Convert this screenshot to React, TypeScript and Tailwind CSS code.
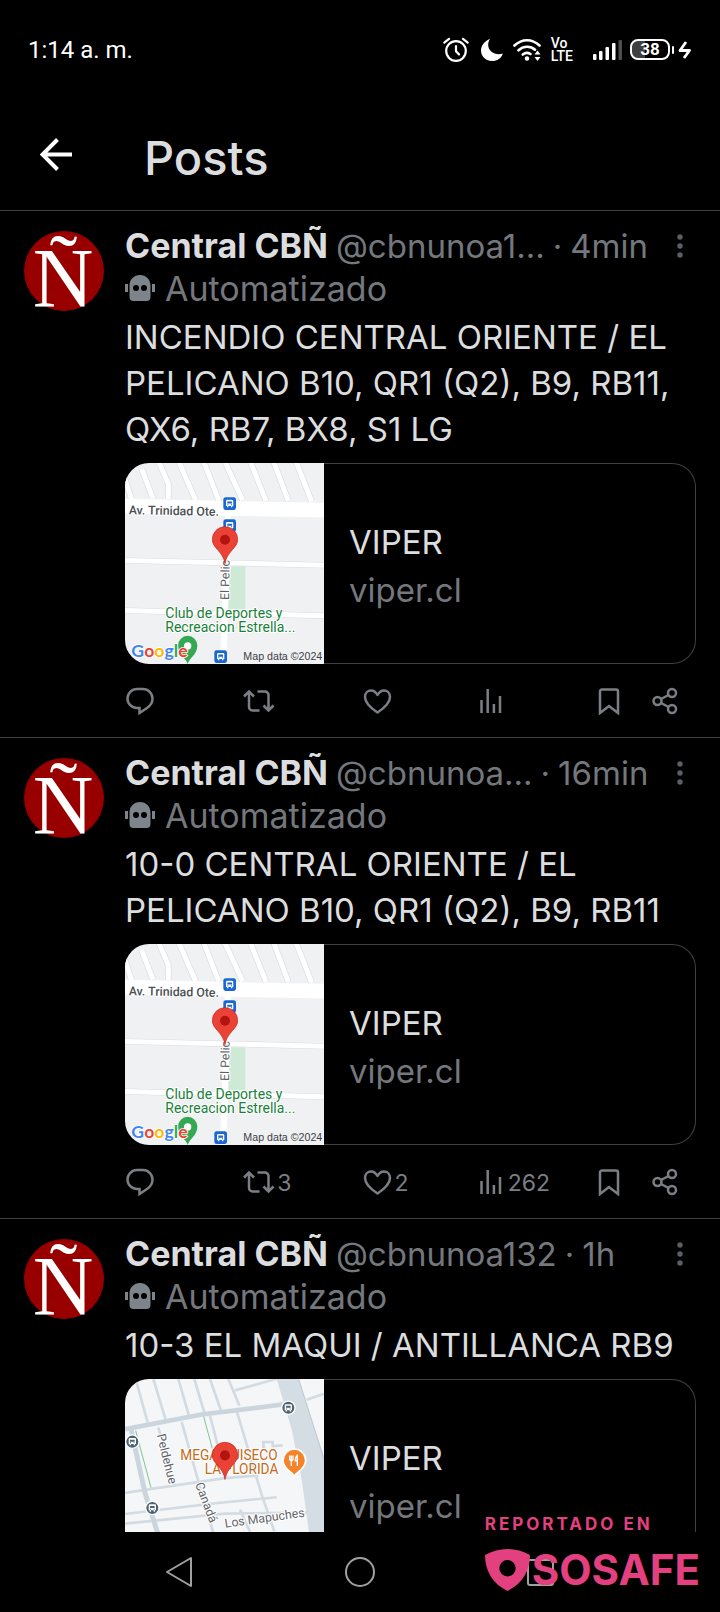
import type { ReactNode } from "react";

type MapKind = "pelicano" | "maqui";

interface Post {
  id: number;
  handle: string;
  time: string;
  text: string;
  map: MapKind;
  reposts?: number;
  likes?: number;
  views?: number;
}

const posts: Post[] = [
  {
    id: 1,
    handle: "@cbnunoa1...",
    time: "4min",
    text: "INCENDIO CENTRAL ORIENTE / EL PELICANO B10, QR1 (Q2), B9, RB11, QX6, RB7, BX8, S1 LG",
    map: "pelicano",
  },
  {
    id: 2,
    handle: "@cbnunoa...",
    time: "16min",
    text: "10-0 CENTRAL ORIENTE / EL PELICANO B10, QR1 (Q2), B9, RB11",
    map: "pelicano",
    reposts: 3,
    likes: 2,
    views: 262,
  },
  {
    id: 3,
    handle: "@cbnunoa132",
    time: "1h",
    text: "10-3 EL MAQUI / ANTILLANCA RB9",
    map: "maqui",
  },
];

function StatusBar() {
  return (
    <div className="flex h-[99px] shrink-0 items-center justify-between px-7 font-['Roboto',sans-serif] text-white">
      <span className="text-2xl">1:14 a. m.</span>
      <div className="flex items-center">
        {/* alarm */}
        <svg className="mr-3" width="26" height="26" viewBox="0 0 26 26" fill="none" stroke="currentColor" strokeWidth="2.2" strokeLinecap="round">
          <circle cx="13" cy="14" r="9.8" />
          <path d="M13 9v5.4l3 3M1.3 5.6 6 1.8M24.7 5.6 20 1.8" />
        </svg>
        {/* do not disturb moon */}
        <svg className="mr-2.5" width="22" height="24" viewBox="0 0 22 24" fill="currentColor">
          <path d="M9 1C3.500 3 0 7.500 0 12.500 0 18.500 5 23 11 23c5 0 9.500-3 10.800-7.600C15.500 18 7.500 14 7.200 7.500 7.100 5 7.700 2.800 9 1Z" />
        </svg>
        {/* wifi */}
        <svg className="mr-2.5" width="28" height="24" viewBox="0 0 28 24" fill="none" stroke="currentColor" strokeWidth="2.6" strokeLinecap="round">
          <path d="M1.500 7.500C9 .5 19 .5 26.500 7.500M5.500 12.300c5-4.600 12-4.600 16.500-.6M9.800 16.500c2.500-2 5-2.200 7.600-.5" />
          <circle cx="14" cy="20.500" r="2.200" fill="currentColor" stroke="none" />
          <path d="m24.500 12.500 3 4h-6zM24.500 23l3-4h-6z" fill="currentColor" stroke="none" />
        </svg>
        <div className="mr-5 text-[14px] leading-[13px] font-medium">
          Vo
          <br />
          LTE
        </div>
        {/* signal */}
        <svg className="mr-2" width="29" height="20" viewBox="0 0 29 20" fill="currentColor">
          <rect x="0" y="14" width="3.500" height="6" rx="1" />
          <rect x="6" y="11" width="3.500" height="9" rx="1" />
          <rect x="12.500" y="7" width="3.500" height="13" rx="1" />
          <rect x="19" y="3" width="3.500" height="17" rx="1" />
          <rect x="25.500" y="0" width="3.500" height="20" rx="1" opacity=".3" />
        </svg>
        {/* battery */}
        <div className="flex h-[21px] w-10 items-center justify-center rounded-lg border-2 border-white bg-linear-to-r from-neutral-700 from-35% to-black to-35% text-[17px] leading-none font-bold">
          38
        </div>
        <div className="mr-1 ml-0.5 h-2 w-0.5 rounded bg-white" />
        <svg width="14" height="20" viewBox="0 0 14 20" fill="none" stroke="currentColor" strokeWidth="2.800" strokeLinejoin="round">
          <path d="M8 2 2 10.500h9.500L6 18" />
        </svg>
      </div>
    </div>
  );
}

function Header() {
  return (
    <header className="flex h-28 shrink-0 items-center border-b border-neutral-700 pl-10">
      <button type="button" aria-label="Back" className="mr-[71px] text-white">
        <svg width="33" height="33" viewBox="0 0 33 33" fill="none" stroke="currentColor" strokeWidth="4">
          <path d="M32 16.500H3M17.500 1.500l-15 15 15 15" />
        </svg>
      </button>
      <h1 className="pt-1.5 text-[47px] leading-none font-medium">Posts</h1>
    </header>
  );
}

function Avatar() {
  return (
    <svg className="mt-1.5 h-20 w-20 shrink-0 overflow-visible" viewBox="0 0 80 80" role="img" aria-label="Central CBÑ">
      <circle cx="40" cy="40" r="40" fill="#980000" />
      <text x="39" y="76" textAnchor="middle" fontSize="84" fill="#fff" className="font-['Liberation_Serif',serif]">
        Ñ
      </text>
    </svg>
  );
}

function Robot() {
  return (
    <svg width="30" height="28" viewBox="0 0 30 28" fill="#7d848b">
      <path d="M0 10h3v8H0zM27 10h3v8h-3z" />
      <path
        fillRule="evenodd"
        d="M4.500 12C4.500 5 9 1 15 1s10.500 4 10.500 11v11a4 4 0 0 1-4 4h-13a4 4 0 0 1-4-4ZM11 11a3 3 0 1 0 0 6 3 3 0 0 0 0-6Zm8 0a3 3 0 1 0 0 6 3 3 0 0 0 0-6Z"
      />
    </svg>
  );
}

function Pin({ x, y }: { x: number; y: number }) {
  return (
    <g transform={`translate(${x} ${y})`}>
      <path
        d="M0 0C-3-18-10-28-22-42c-9-10-16-18-16-31a38 38 0 0 1 76 0c0 13-7 21-16 31C10-28 3-18 0 0Z"
        fill="#ea4335"
        stroke="#c5221f"
        strokeWidth="2"
      />
      <circle cy="-72" r="15" fill="#b31412" />
    </g>
  );
}

function BusStop({ x, y, round }: { x: number; y: number; round?: boolean }) {
  return (
    <g transform={`translate(${x} ${y})`}>
      {round ? (
        <circle r="20" fill="#4b6174" stroke="#fff" strokeWidth="4" />
      ) : (
        <rect x="-19" y="-19" width="38" height="38" rx="7" fill="#1967d2" />
      )}
      <path
        fillRule="evenodd"
        fill="#fff"
        d="M-7-11H7q4 0 4 4V7H8v4H4V7h-8v4h-4V7h-3V-7q0-4 4-4ZM-7-6v6H7v-6ZM-7 2v3h3V2Zm11 0v3h3V2Z"
      />
    </g>
  );
}

function PelicanoMap() {
  return (
    <svg viewBox="30 27 597 600" preserveAspectRatio="none" className="h-full w-full font-['Roboto',sans-serif]">
      <rect x="30" y="27" width="597" height="600" fill="#f0f1f3" />
      <g fill="none" stroke="#dadce0" strokeWidth="19">
        <path d="m28 70 22 66M80 45l34 88M132 25l28 65v45M190 20l52 118M265 20l46 118M328 20l55 118M405 20l48 120M475 20l45 120M542 20l48 122" />
      </g>
      <g fill="none" stroke="#fff" strokeWidth="15">
        <path d="m28 70 22 66M80 45l34 88M132 25l28 65v45M190 20l52 118M265 20l46 118M328 20l55 118M405 20l48 120M475 20l45 120M542 20l48 122" />
      </g>
      <path d="M30 134 627 146V190L30 178Z" fill="#fff" />
      <path d="M348 335h43v128h-55Z" fill="#ceead6" />
      <g fill="none" stroke="#dadce0">
        <path d="M30 318 627 332M30 467l597 16" strokeWidth="18" />
      </g>
      <g fill="none" stroke="#fff">
        <path d="M340 140 325 627" strokeWidth="19" />
        <path d="M30 318 627 332M30 467l597 16" strokeWidth="15" />
      </g>
      <BusStop x={344} y={148} />
      <BusStop x={344} y={214} />
      <BusStop x={317} y={605} />
      <g stroke="#fff" strokeWidth="6" strokeLinejoin="round" paintOrder="stroke">
        <text x="41" y="180" fontSize="37" fontWeight="500" fill="#4a4f55" transform="rotate(1 41 180)">
          Av. Trinidad Ote.
        </text>
        <text x="0" y="0" fontSize="37" fill="#5f6368" transform="translate(342 436) rotate(-89)">
          El Pelic
        </text>
        <text x="151" y="489" fontSize="42" fill="#188038">
          Club de Deportes y
        </text>
        <text x="151" y="532" fontSize="42" fill="#188038">
          Recreacion Estrella...
        </text>
      </g>
      <Pin x={330} y={328} />
      <path d="M218 627c-4-16-29-28-29-55a29 29 0 0 1 58 0c0 27-25 39-29 55Z" fill="#34a853" />
      <circle cx="218" cy="573" r="11" fill="#fff" />
      <text x="49" y="606" fontSize="53" fontWeight="700" stroke="#fff" strokeWidth="5" paintOrder="stroke" className="font-['Lato',sans-serif]">
        <tspan fill="#4285f4">G</tspan>
        <tspan fill="#ea4335">o</tspan>
        <tspan fill="#fbbc04">o</tspan>
        <tspan fill="#4285f4">g</tspan>
        <tspan fill="#34a853">l</tspan>
        <tspan fill="#ea4335">e</tspan>
      </text>
      <text x="385" y="614" fontSize="32" fill="#3c4043" className="font-['Liberation_Sans',sans-serif]">
        Map data ©2024
      </text>
    </svg>
  );
}

function MaquiMap() {
  return (
    <svg viewBox="30 30 597 600" preserveAspectRatio="none" className="h-full w-full font-['Roboto',sans-serif]">
      <rect x="30" y="30" width="597" height="600" fill="#f5f6f7" />
      <g fill="none" stroke="#d3dbe2" strokeWidth="8">
        <path d="m62 30 36 130M115 30l38 125M190 30l32 110M238 30l30 100M285 30l32 92M340 30l25 60 8 20M360 64l130-36M130 175l22 75M200 158l45 160 58 200M285 140l50 190M365 125l75 250 38 110M30 370l80-12 220-32 100-8M30 433l270-32 185-18M30 462l300-30 297-4M375 420l30 66M445 225l3 14M445 238v-20h28v12l30-2M575 92l52-18M605 272l22-4" />
      </g>
      <path d="M485 30h66l35 110 41 120v370h-25L560 330 530 180Z" fill="#d4dce4" />
      <path d="m551 30 35 110 41 130" fill="none" stroke="#bfc9d2" strokeWidth="3" />
      <path d="M30 180 260 136 520 104 530 130" fill="none" stroke="#cbd5dd" strokeWidth="14" />
      <path d="m48 180 42 190 38 120 30 100" fill="none" stroke="#cbd5dd" strokeWidth="15" />
      <path d="m62 184 46 170M266 142l26 96" fill="none" stroke="#7bc796" strokeWidth="3" />
      <BusStop x={520} y={116} round />
      <BusStop x={52} y={217} round />
      <BusStop x={112} y={415} round />
      <g stroke="#fff" strokeWidth="6" strokeLinejoin="round" paintOrder="stroke" fontSize="37" fill="#5f6368">
        <text transform="translate(125 197) rotate(76)">Peldehue</text>
        <text transform="translate(240 344) rotate(69)">Canadá</text>
        <text transform="translate(331 474) rotate(-8)">Los Mapuches</text>
        <g fill="#c26a1c" fontSize="41" textAnchor="end">
          <text x="488" y="272">MEGA QUISECO</text>
          <text x="490" y="314">LA FLORIDA</text>
        </g>
      </g>
      <path d="M538 320c-6-12-34-22-34-47a34 34 0 0 1 68 0c0 25-28 35-34 47Z" fill="#f5832b" stroke="#fff" strokeWidth="5" />
      <path d="M524 258v10q0 6 5 6t5-6v-10M529 258v32M547 290v-32q-6 4-6 16h6" fill="none" stroke="#fff" strokeWidth="4" />
      <Pin x={330} y={330} />
    </svg>
  );
}

function LinkCard({ map }: { map: MapKind }) {
  return (
    <a href="#viper" className="mt-[11px] flex h-[201px]">
      <div className="w-[199px] shrink-0 overflow-hidden rounded-l-[24px]">
        {map === "pelicano" ? <PelicanoMap /> : <MaquiMap />}
      </div>
      <div className="flex flex-1 flex-col justify-center rounded-r-[24px] border border-l-0 border-neutral-700 pt-1 pl-[25px] leading-12">
        <span>VIPER</span>
        <span className="text-[#74787d]">viper.cl</span>
      </div>
    </a>
  );
}

function Action({ label, count, className, children }: { label: string; count?: number; className: string; children: ReactNode }) {
  return (
    <button type="button" aria-label={label} className={`flex items-center gap-0.5 ${className}`}>
      {children}
      {count !== undefined && <span className="pt-1 text-[23px] leading-none">{count}</span>}
    </button>
  );
}

function Actions({ post }: { post: Post }) {
  return (
    <div className="flex h-[73px] items-center text-[#7b7f84]">
      <Action label="Reply" className="flex-1">
        <svg width="30" height="28" viewBox="0 0 30 28" fill="none" stroke="currentColor" strokeWidth="2.500">
          <path d="M12 2h6a9.500 9.500 0 0 1 9.500 9.500c0 4.500-2.500 7.500-5.500 9.500L14.500 26v-5H12A9.500 9.500 0 0 1 12 2Z" />
        </svg>
      </Action>
      <Action label="Repost" count={post.reposts} className="flex-1">
        <svg width="32" height="28" viewBox="0 0 32 28" fill="none" stroke="currentColor" strokeWidth="2.500">
          <path d="m1 9.500 5-5 5 5M6 5v15a3.500 3.500 0 0 0 3.500 3.500h7M14.500 4.500h7.500A3.500 3.500 0 0 1 25.500 8v15M20.500 18.500l5 5 5-5" />
        </svg>
      </Action>
      <Action label="Like" count={post.likes} className="flex-1">
        <svg width="31" height="28" viewBox="0 0 31 28" fill="none" stroke="currentColor" strokeWidth="2.500" strokeLinejoin="round">
          <path d="M15.500 25.500C9.500 21.500 3 16 3 10c0-4 2.700-6.500 6-6.500 3 0 5 1.800 6.500 4.500 1.500-2.700 3.500-4.500 6.500-4.500 3.300 0 6 2.500 6 6.500 0 6-6.500 11.500-12.500 15.500Z" />
        </svg>
      </Action>
      <Action label="Views" count={post.views} className="flex-1">
        <svg width="26" height="28" viewBox="0 0 26 28" fill="none" stroke="currentColor" strokeWidth="2.500">
          <path d="M1.500 26V13M7.700 26V2M13.900 26v-9M20 26V9" />
        </svg>
      </Action>
      <Action label="Bookmark" className="w-[54px]">
        <svg width="24" height="28" viewBox="0 0 24 28" fill="none" stroke="currentColor" strokeWidth="2.500">
          <path d="M4 2.500h14a2 2 0 0 1 2 2V26l-9-7-9 7V4.500a2 2 0 0 1 2-2Z" />
        </svg>
      </Action>
      <Action label="Share" className="w-11">
        <svg width="28" height="28" viewBox="0 0 28 28" fill="none" stroke="currentColor" strokeWidth="2.500">
          <circle cx="20" cy="6" r="4" />
          <circle cx="5.500" cy="14" r="4" />
          <circle cx="20" cy="22" r="4" />
          <path d="m9 12 7.500-4M9 16l7.500 4" />
        </svg>
      </Action>
    </div>
  );
}

function PostItem({ post }: { post: Post }) {
  return (
    <article className="flex gap-[21px] border-b border-neutral-700 pt-3.5 pr-6 pl-6">
      <Avatar />
      <div className="min-w-0 flex-1">
        <div className="flex h-[42px] items-center">
          <div className="flex min-w-0 flex-1 items-baseline gap-2 whitespace-nowrap text-[#74787d]">
            <span className="text-[34px] font-bold text-[#dcdddf]">Central CBÑ</span>
            <span>{post.handle}</span>
            <span>·</span>
            <span>{post.time}</span>
          </div>
          <button type="button" aria-label="More options" className="mr-3 text-[#5b5f63]">
            <svg width="8" height="28" viewBox="0 0 8 28" fill="currentColor">
              <circle cx="4" cy="5" r="2.700" />
              <circle cx="4" cy="14" r="2.700" />
              <circle cx="4" cy="23" r="2.700" />
            </svg>
          </button>
        </div>
        <div className="flex h-[42px] items-center gap-2.5 text-[34px] text-[#74787d]">
          <Robot />
          <span>Automatizado</span>
        </div>
        <p className="mt-[5px] leading-[46px]">{post.text}</p>
        <LinkCard map={post.map} />
        <Actions post={post} />
      </div>
    </article>
  );
}

function NavBar() {
  return (
    <nav className="flex h-20 shrink-0 items-center justify-center gap-[148px] text-neutral-400">
      <button type="button" aria-label="Back">
        <svg width="32" height="32" viewBox="0 0 32 32" fill="none" stroke="currentColor" strokeWidth="2" strokeLinejoin="round">
          <path d="M27 2v28L3 16Z" />
        </svg>
      </button>
      <button type="button" aria-label="Home">
        <svg width="32" height="32" viewBox="0 0 32 32" fill="none" stroke="currentColor" strokeWidth="2">
          <circle cx="16" cy="16" r="14" />
        </svg>
      </button>
      <button type="button" aria-label="Recent apps">
        <svg width="32" height="32" viewBox="0 0 32 32" fill="none" stroke="currentColor" strokeWidth="2">
          <rect x="4" y="4" width="25" height="25" rx="2" />
        </svg>
      </button>
    </nav>
  );
}

function Watermark() {
  return (
    <div className="absolute right-5 bottom-5 text-[#e2407f]">
      <div className="text-[17px] leading-6 font-bold tracking-[3px]">REPORTADO EN</div>
      <div className="mt-3 flex items-center gap-0.5">
        <svg width="45" height="44" viewBox="0 0 45 44" fill="currentColor">
          <path fillRule="evenodd" d="M0 7C14-1 31-1 45 7c0 16-8 29-22.500 36C8 36 0 23 0 7Zm22.500 5a8.200 8.200 0 1 0 0 16.400 8.200 8.200 0 0 0 0-16.400Z" />
        </svg>
        <span className="text-[42px] leading-[44px] font-bold">SOSAFE</span>
      </div>
    </div>
  );
}

export default function App() {
  return (
    <div className="relative flex h-screen flex-col overflow-hidden bg-black font-['Inter',sans-serif] text-[33px] text-[#dcdddf]">
      <StatusBar />
      <Header />
      <main className="min-h-0 flex-1 overflow-hidden">
        {posts.map((post) => (
          <PostItem key={post.id} post={post} />
        ))}
      </main>
      <NavBar />
      <Watermark />
    </div>
  );
}
